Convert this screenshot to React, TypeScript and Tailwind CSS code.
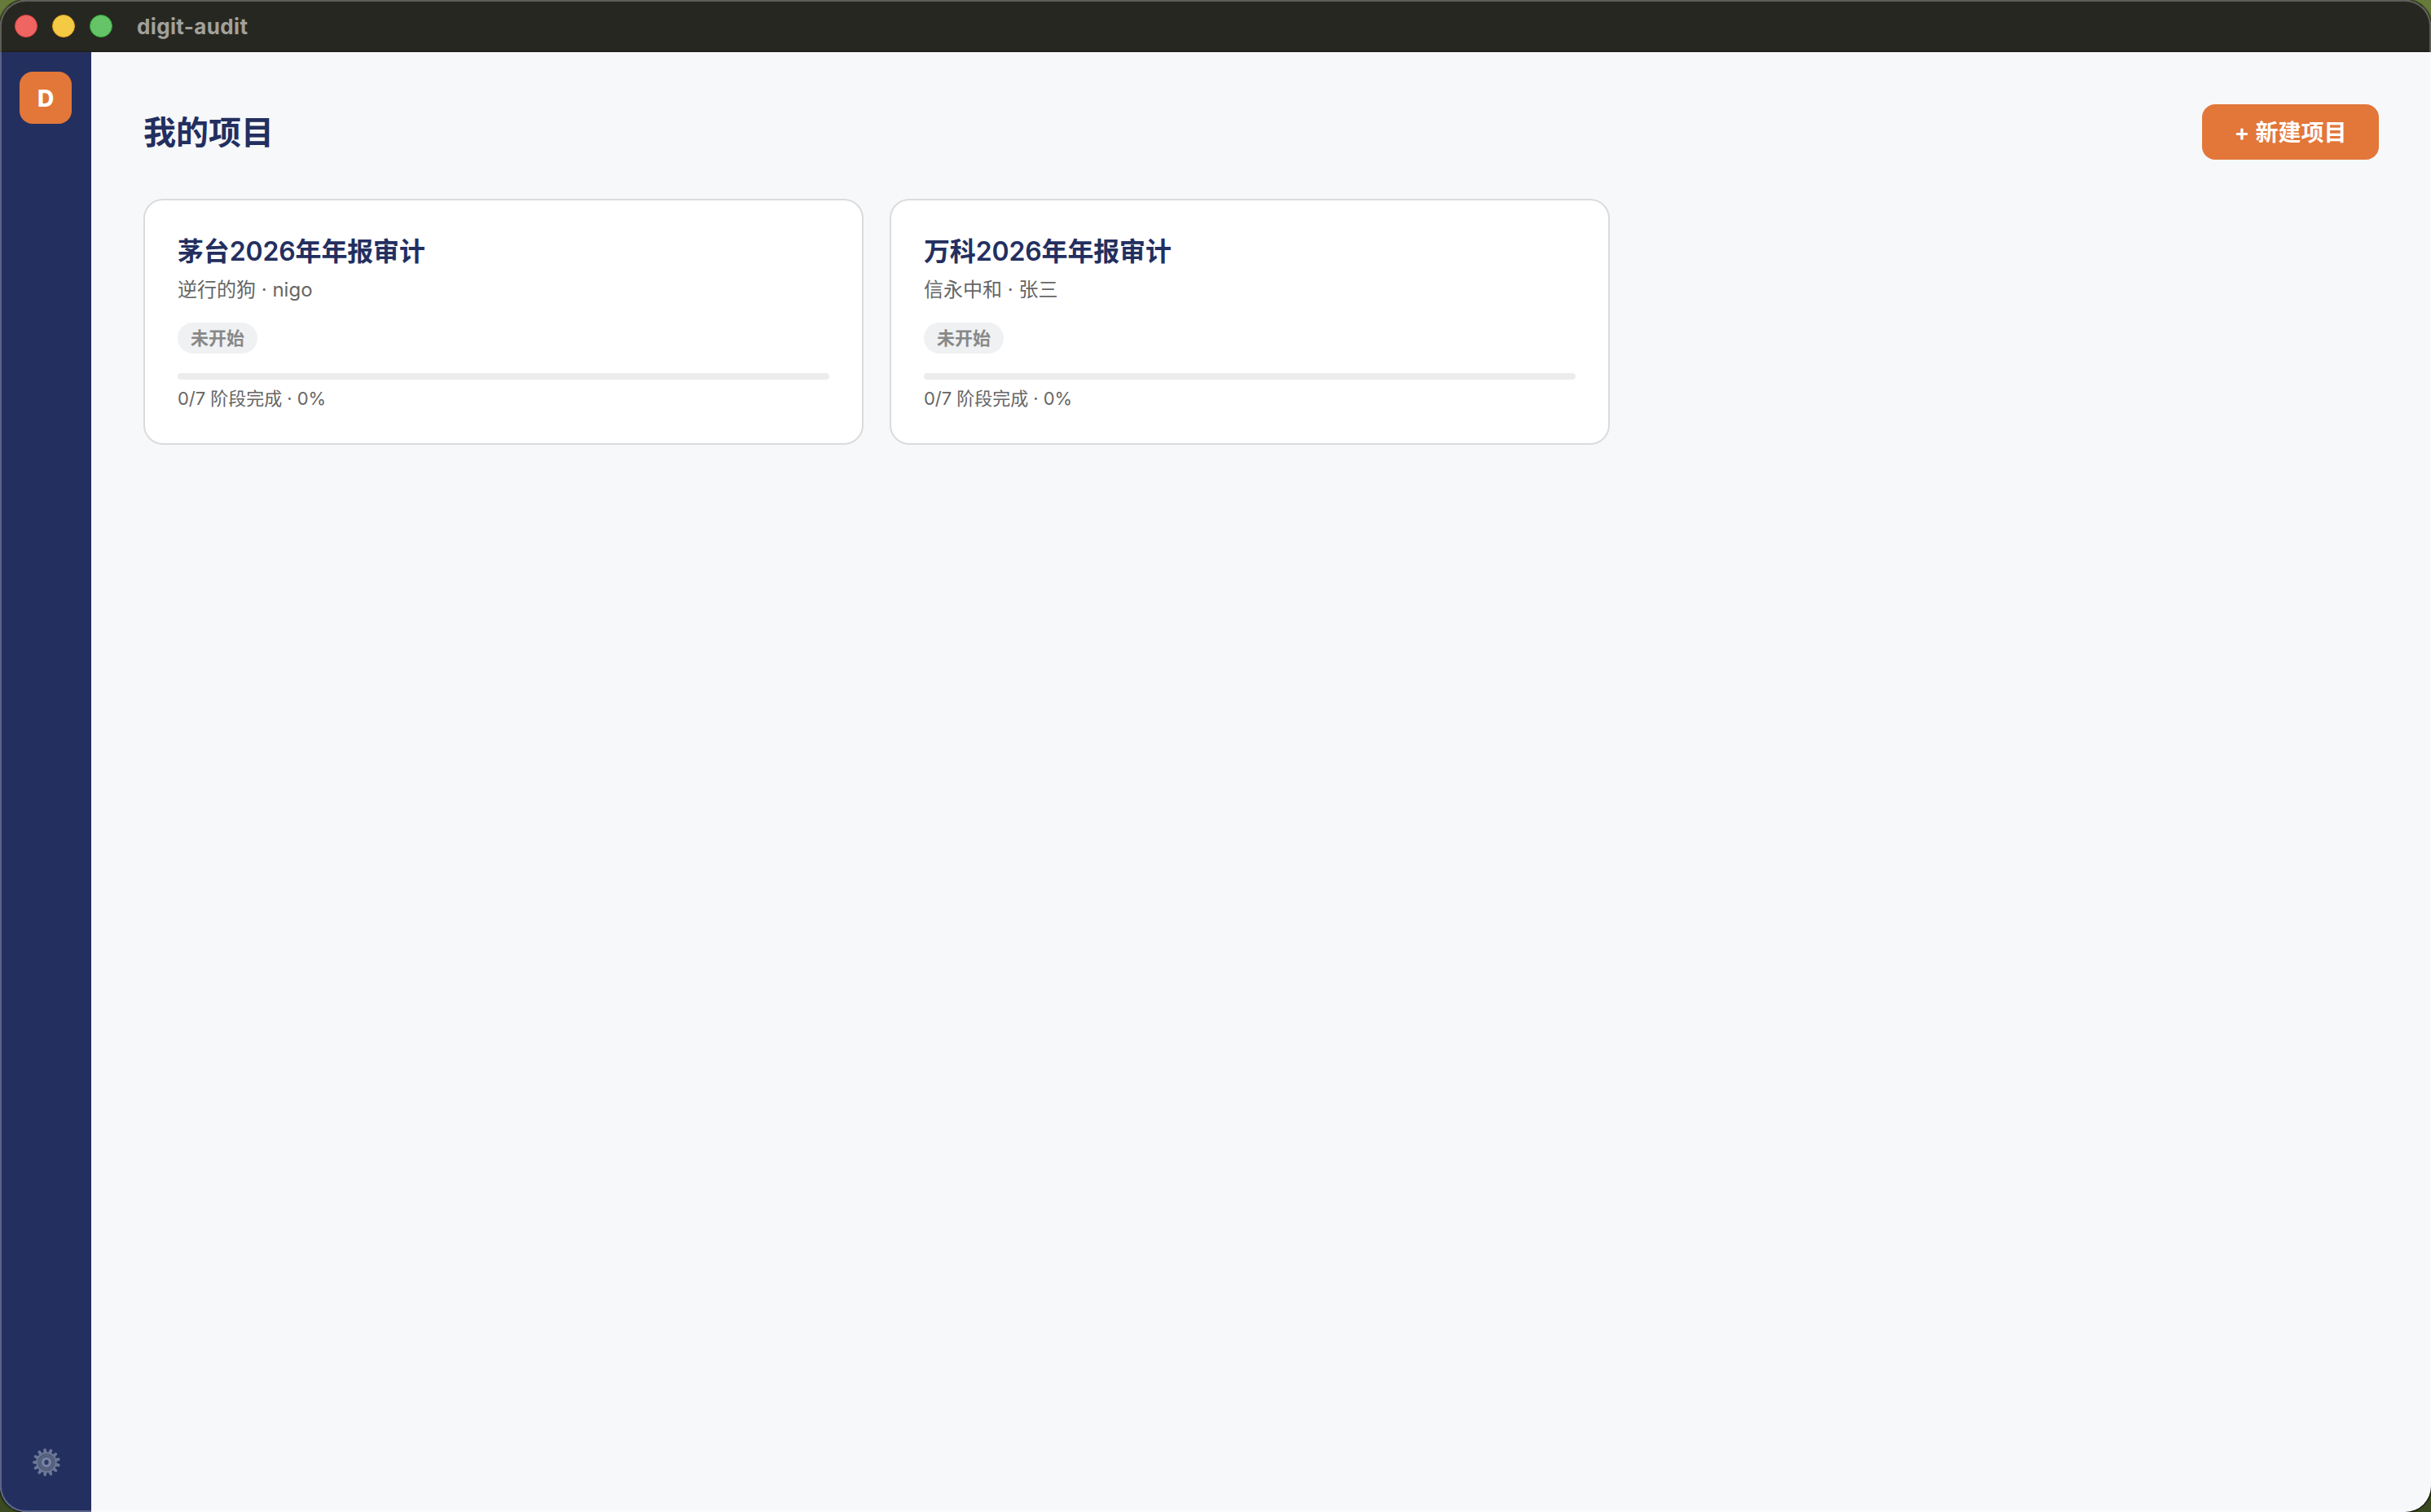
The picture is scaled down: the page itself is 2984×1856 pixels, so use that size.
import clsx from 'clsx';

type Project = {
  id: number;
  name: string;
  firm: string;
  owner: string;
  status: string;
  done: number;
  total: number;
};

const PROJECTS: Project[] = [
  { id: 1, name: '茅台2026年年报审计', firm: '逆行的狗', owner: 'nigo', status: '未开始', done: 0, total: 7 },
  { id: 2, name: '万科2026年年报审计', firm: '信永中和', owner: '张三', status: '未开始', done: 0, total: 7 },
];

const LIGHTS = [
  'bg-[#ee6562] border-[#e0443e]',
  'bg-[#f4ca44] border-[#dea123]',
  'bg-[#65c467] border-[#2fa836]',
];

const TEETH = Array.from({ length: 13 }, (_, i) => (i * 360) / 13);

function GearIcon() {
  return (
    <svg width="36" height="36" viewBox="0 0 36 36" fill="none">
      {TEETH.map((angle) => (
        <path key={angle} d="M15.6 7 16.4 1.6Q18 0 19.6 1.6L20.4 7Z" fill="#6c7796" transform={`rotate(${angle - 7} 18 18)`} />
      ))}
      <circle cx="18" cy="18" r="12.6" fill="#6c7796" />
      <circle cx="18" cy="18" r="10.6" fill="#4e5977" />
      <circle cx="18" cy="18" r="8.4" stroke="#606b89" strokeWidth="1.2" />
      <circle cx="18" cy="18" r="4.6" stroke="#7682a2" strokeWidth="3.2" />
      <ellipse cx="18" cy="18" rx="2.2" ry="3" fill="#2d3965" />
    </svg>
  );
}

function TitleBar() {
  return (
    <header className="flex h-16 shrink-0 items-center border-b-2 border-[#20201b] bg-[#272721] pt-0.5 pl-[18px]">
      <div className="flex gap-[18px]">
        {LIGHTS.map((color) => (
          <span key={color} className={clsx('size-7 rounded-full border', color)} />
        ))}
      </div>
      <span className="ml-[30px] pt-0.5 text-[26px] leading-8 font-bold tracking-[0.35px] text-[#a1a19c]">digit-audit</span>
    </header>
  );
}

function Sidebar() {
  return (
    <aside className="flex w-28 shrink-0 flex-col items-center justify-between bg-[#232f5f] pt-6 pb-[43px]">
      <div className="flex size-16 items-center justify-center rounded-2xl bg-[#e27739] pt-0.5 text-[28px] font-extrabold text-white">
        D
      </div>
      <button type="button" aria-label="设置" className="pl-px">
        <GearIcon />
      </button>
    </aside>
  );
}

function ProjectCard({ project }: { project: Project }) {
  const percent = Math.round((project.done / project.total) * 100);

  return (
    <article className="flex flex-col items-start rounded-3xl border-2 border-[#dadbdd] bg-white p-10">
      <h2 className="pt-px text-[32px] leading-[44px] font-semibold tracking-[-0.15px] text-[#232f5f]">{project.name}</h2>
      <p className="mt-[11px] text-2xl leading-7 text-[#666666]">
        {project.firm} · {project.owner}
      </p>
      <span className="mt-[26px] flex h-[38px] items-center rounded-full bg-[#eff1f3] px-4 text-[22px] font-semibold text-[#888888]">
        {project.status}
      </span>
      <div className="mt-6 h-2 w-full overflow-hidden rounded-full bg-[#ececec]">
        <div className="h-full bg-[#e27739]" style={{ width: `${percent}%` }} />
      </div>
      <p className="mt-2 text-[22px] leading-[30px] tracking-[-0.05px] text-[#666666]">
        {project.done}/{project.total} 阶段完成 · {percent}%
      </p>
    </article>
  );
}

export default function App() {
  return (
    <div className="h-[1856px] w-[2984px] bg-linear-to-b from-[#667b3b] to-[#3a4a20] font-['Inter','Noto_Sans_CJK_SC',sans-serif]">
      <div className="relative flex h-full flex-col overflow-hidden rounded-[32px] bg-[#f7f8fa] shadow-[0_0_2px_1px_#000000]">
        <TitleBar />
        <div className="flex min-h-0 flex-1">
          <Sidebar />
          <main className="flex-1 p-16">
            <div className="mb-12 flex h-[68px] items-center justify-between">
              <h1 className="pt-px text-[40px] font-semibold text-[#232f5f]">我的项目</h1>
              <button type="button" className="h-[68px] w-[217px] rounded-2xl bg-[#e27739] pt-px text-center text-[28px] font-semibold whitespace-nowrap text-white">
                + 新建项目
              </button>
            </div>
            <div className="grid grid-cols-[884px_884px] gap-8">
              {PROJECTS.map((project) => (
                <ProjectCard key={project.id} project={project} />
              ))}
            </div>
          </main>
        </div>
        {/* window edge highlight */}
        <div className="pointer-events-none absolute inset-0 rounded-[32px] border-2 border-white/25" />
      </div>
    </div>
  );
}
